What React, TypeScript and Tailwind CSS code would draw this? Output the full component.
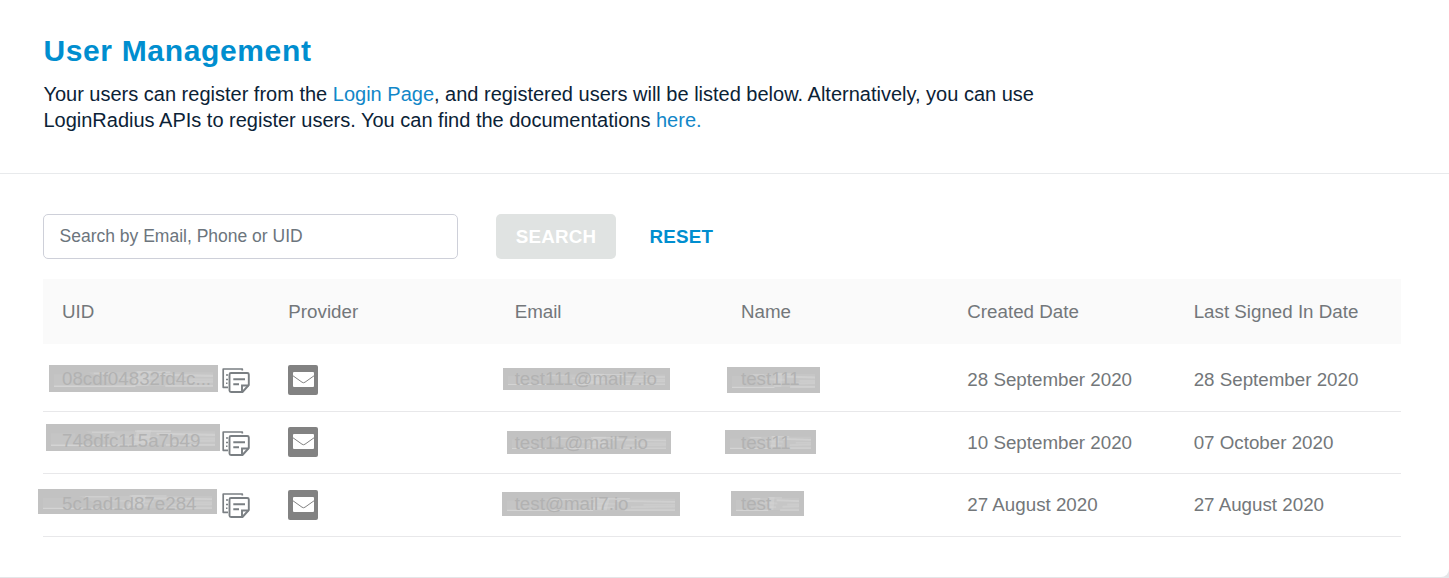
import React from "react";

type Masked = { text: string; box: string; label: string };
type Row = {
  height: string;
  iconShift: string;
  textShift: string;
  uid: Masked;
  email: Masked;
  name: Masked;
  created: string;
  signedIn: string;
};

const rows: Row[] = [
  {
    height: "h-[63px]",
    iconShift: "",
    textShift: "",
    uid: { text: "08cdf04832fd4c...", box: "left-[6px] top-[16px] w-[169px] h-[27px]", label: "left-[8px] -top-[2px]" },
    email: { text: "test111@mail7.io", box: "left-[7px] top-[19px] w-[167px] h-[22px]", label: "left-[7px] -top-[5px]" },
    name: { text: "test111", box: "left-[5px] top-[18px] w-[93px] h-[26px]", label: "left-[9px] -top-[4px]" },
    created: "28 September 2020",
    signedIn: "28 September 2020",
  },
  {
    height: "h-[62px]",
    iconShift: "pb-[2px]",
    textShift: "pt-[1px]",
    uid: { text: "748dfc115a7b49", box: "left-[3px] top-[12px] w-[174px] h-[27px]", label: "left-[11px] top-[1px]" },
    email: { text: "test11@mail7.io", box: "left-[11px] top-[19px] w-[164px] h-[23px]", label: "left-[3px] -top-[4px]" },
    name: { text: "test11", box: "left-[3px] top-[18px] w-[91px] h-[24px]", label: "left-[11px] -top-[3px]" },
    created: "10 September 2020",
    signedIn: "07 October 2020",
  },
  {
    height: "h-[63px]",
    iconShift: "",
    textShift: "",
    uid: { text: "5c1ad1d87e284", box: "-left-[5px] top-[15px] w-[179px] h-[25px]", label: "left-[19px] -top-[1px]" },
    email: { text: "test@mail7.io", box: "left-[6px] top-[18px] w-[178px] h-[24px]", label: "left-[8px] -top-[4px]" },
    name: { text: "test", box: "left-[9px] top-[17px] w-[73px] h-[25px]", label: "left-[5px] -top-[3px]" },
    created: "27 August 2020",
    signedIn: "27 August 2020",
  },
];

const headers = ["UID", "Provider", "Email", "Name", "Created Date", "Last Signed In Date"];

/* Grey redaction bar with a smeared, half-legible value inside. */
function Redacted({ value }: { value: Masked }) {
  return (
    <span className={`absolute bg-[#c2c2c2] p-[5px] ${value.box}`}>
      <span className="relative block h-full w-full">
        <svg className="absolute inset-0 h-full w-full" viewBox="0 0 160 16" preserveAspectRatio="none" aria-hidden="true">
          <path d="M34 2H160V15H60z" fill="#cecece" opacity=".35" />
          <path d="M84 1h14l-3 14H80z" fill="#dadada" opacity=".35" />
          <path d="M0 4h24v12H0z" fill="#c8c8c8" opacity=".5" />
          <g stroke="#d8d8d8">
            <path d="M82 2h35M40 3h22" strokeWidth="1.5" opacity=".55" />
            <path d="M103 4.5 160 5.5" strokeWidth="2" opacity=".6" />
            <path d="M65 7l40 1M130 9h30" strokeWidth="2" opacity=".35" />
            <path d="M80 12h22M118 11.5l42-.5" strokeWidth="2" opacity=".4" />
            <path d="M0 15.3h82M112 15h48" strokeWidth="1.3" opacity=".8" />
          </g>
        </svg>
        <span className={`absolute whitespace-nowrap leading-[22px] text-[#b2b2b2] ${value.label}`}>{value.text}</span>
      </span>
    </span>
  );
}

function CopyIcon() {
  return (
    <svg className="absolute left-[179px] top-[18px] h-[28px] w-[28px]" viewBox="0 0 28 28" fill="none" stroke="#7a7f83" strokeWidth="1.9" aria-hidden="true">
      <path d="M20.3 3.5V2H1.2V20.3H6" strokeWidth="1.7" strokeLinejoin="round" />
      <path d="M4 8h2M4 12.5h2M4 16.3h1.5" strokeWidth="1.4" />
      <path d="M9 6H25.3Q26.8 6 26.8 7.5V18L20.5 25H9Q7.5 25 7.5 23.5V7.5Q7.5 6 9 6z" strokeLinejoin="round" />
      <path d="M20 24.8V18.5H26.6M11.3 12.2H23M11.3 17.2H17" />
    </svg>
  );
}

function MailIcon() {
  return (
    <svg className="h-[30px] w-[30px]" viewBox="0 0 30 30" aria-hidden="true">
      <rect width="30" height="30" rx="2" fill="#828282" />
      <rect x="5" y="7" width="21" height="15" rx="1" fill="#fff" />
      <path d="M5 10.8 14 17.2Q15.5 18.3 17 17.2L26 10.8" fill="none" stroke="#828282" strokeWidth="1" />
    </svg>
  );
}

export default function App() {
  return (
    <div className="h-[578px] w-full overflow-hidden bg-[#e4e6e8] font-['Liberation_Sans',Arial,sans-serif]">
      <main className="h-[577px] rounded-br-[8px] bg-white">
        <header className="h-[174px] border-b border-[#e8eaec] pl-[43.4px] pt-8">
          <h1 className="text-[30px] font-bold leading-[38px] tracking-[0.65px] text-[#008ecf]">User Management</h1>
          <p className="mt-[11px] w-[1020px] text-[20px] leading-[26px] text-[#0b2236]">
            Your users can register from the <a className="text-[#1287c8]">Login Page</a>, and registered users will be listed below. Alternatively, you can use
            <br />
            LoginRadius APIs to register users. You can find the documentations <a className="text-[#1287c8]">here.</a>
          </p>
        </header>
        <form className="flex pl-[43px] pt-10" onSubmit={(e) => e.preventDefault()}>
          <input
            className="h-[45px] w-[415px] rounded-[5px] border border-[#ced0d9] pl-[15.5px] pr-4 text-[17.5px] placeholder:text-[#6c757d]"
            placeholder="Search by Email, Phone or UID"
          />
          <button className="ml-[38px] h-[45px] w-[120px] rounded-[5px] bg-[#e0e3e2] pt-[1px] text-[18.75px] font-bold tracking-[0.2px] text-white">SEARCH</button>
          <button className="ml-[33.5px] h-[45px] pt-[1px] text-[18.75px] font-bold tracking-[0.25px] text-[#008ecf]">RESET</button>
        </form>
        <section className="ml-[43px] mt-5 w-[1358px] text-[18.75px] text-[#73777a]">
          <div className="mb-[5px] grid h-[65px] grid-cols-6 items-center bg-[#fafafa] pt-[2px]">
            {headers.map((h) => (
              <span key={h} className="pl-[19px]">{h}</span>
            ))}
          </div>
          {rows.map((r) => (
            <div key={r.uid.text} className={`grid grid-cols-6 border-b border-[#e8e8ea] ${r.height}`}>
              <div className="relative">
                <Redacted value={r.uid} />
                <CopyIcon />
              </div>
              <div className={`flex items-center pl-[19px] ${r.iconShift}`}>
                <MailIcon />
              </div>
              <div className="relative">
                <Redacted value={r.email} />
              </div>
              <div className="relative">
                <Redacted value={r.name} />
              </div>
              <div className={`flex items-center pl-[19px] ${r.textShift}`}>{r.created}</div>
              <div className={`flex items-center pl-[19px] ${r.textShift}`}>{r.signedIn}</div>
            </div>
          ))}
        </section>
      </main>
    </div>
  );
}
